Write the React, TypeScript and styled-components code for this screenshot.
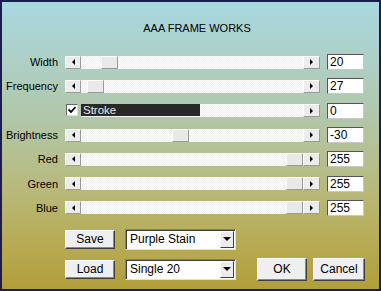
import React from "react";
import styled, { createGlobalStyle, css } from "styled-components";

const Global = createGlobalStyle`
  html, body { margin: 0; padding: 0; background: #fff; }
  #root { width: 381px; height: 291px; }
`;

const Frame = styled.div`
  width: 381px;
  height: 291px;
  box-sizing: border-box;
  border: 2px solid #1c1c4e;
  background: linear-gradient(180deg, #a8d8e0 0%, #aecfc4 22%, #b1c6a6 42%, #b7bb82 62%, #b7ad58 82%, #b29e3a 100%);
  font-family: "Liberation Sans", Arial, sans-serif;
  font-size: 11px;
  color: #000;
  display: flex;
  flex-direction: column;
`;

const Title = styled.div`
  margin-top: 19px;
  padding-left: 13px;
  height: 14px;
  line-height: 14px;
  text-align: center;
  font-size: 11px;
`;

const Rows = styled.div`
  margin-top: 15px;
  display: flex;
  flex-direction: column;
`;

const Row = styled.div`
  display: flex;
  align-items: center;
  height: 24.3px;
`;

const Label = styled.div`
  width: 56px;
  text-align: right;
  white-space: nowrap;
`;

const SliderWrap = styled.div`
  margin-left: 7px;
  width: 255px;
  height: 13px;
  display: flex;
`;

const raised = css`
  box-sizing: border-box;
  background: #ececec;
  border-top: 1px solid #ffffff;
  border-left: 1px solid #ffffff;
  border-right: 1px solid #9a9a9a;
  border-bottom: 1px solid #9a9a9a;
`;

const ArrowBtn = styled.div<{ $w: number }>`
  ${raised};
  width: ${(p) => p.$w}px;
  height: 13px;
  display: flex;
  align-items: center;
  justify-content: center;
  flex: none;
`;

const Arrow = styled.span<{ $dir: "left" | "right" }>`
  width: 0;
  height: 0;
  border-top: 3px solid transparent;
  border-bottom: 3px solid transparent;
  ${(p) =>
    p.$dir === "left"
      ? css`border-right: 3px solid #000;`
      : css`border-left: 3px solid #000;`}
`;

const Track = styled.div`
  flex: 1;
  height: 13px;
  display: flex;
  align-items: stretch;
  background: repeating-conic-gradient(#ffffff 0 25%, #eeeeee 0 50%) 0 0 / 2px 2px;
`;

const Thumb = styled.div<{ $pos: number }>`
  ${raised};
  margin-left: ${(p) => p.$pos}px;
  width: 17px;
  height: 13px;
  background: #e9e9e9;
`;

const ValueBox = styled.div`
  margin-left: 7px;
  width: 37px;
  height: 16px;
  box-sizing: border-box;
  background: #fff;
  border-top: 1px solid #555;
  border-left: 1px solid #555;
  border-right: 1px solid #c8c8c8;
  border-bottom: 1px solid #c8c8c8;
  font-size: 12px;
  line-height: 14px;
  padding-left: 2px;
`;

const Check = styled.div`
  margin-left: 1px;
  width: 12px;
  height: 12px;
  box-sizing: border-box;
  background: #fff;
  border-top: 1px solid #666;
  border-left: 1px solid #666;
  border-right: 1px solid #ddd;
  border-bottom: 1px solid #ddd;
  display: flex;
  align-items: center;
  justify-content: center;
  margin-right: 3px;
  flex: none;
`;

const Fill = styled.div`
  width: 119px;
  height: 12px;
  background: #282828;
  color: #e8e8e8;
  font-size: 11.5px;
  line-height: 12px;
  padding-left: 2px;
  box-sizing: border-box;
`;

const Bottom = styled.div`
  margin-top: 8px;
  padding-left: 63px;
  display: flex;
  flex-direction: column;
  gap: 8px;
`;

const BRow = styled.div`
  display: flex;
  align-items: center;
  height: 22px;
`;

const Button = styled.div<{ $w: number; $h: number; $ml?: number }>`
  box-sizing: border-box;
  width: ${(p) => p.$w}px;
  height: ${(p) => p.$h}px;
  margin-left: ${(p) => p.$ml ?? 0}px;
  background: #efefef;
  border-top: 1px solid #fff;
  border-left: 1px solid #fff;
  border-right: 1px solid #404040;
  border-bottom: 1px solid #404040;
  box-shadow: inset -1px -1px #8a8a8a;
  display: flex;
  align-items: center;
  justify-content: center;
  font-size: 12px;
  flex: none;
`;

const Combo = styled.div`
  margin-left: 10px;
  width: 111px;
  height: 21px;
  box-sizing: border-box;
  background: #fff;
  border-top: 1px solid #808080;
  border-left: 1px solid #808080;
  border-right: 1px solid #e0e0e0;
  border-bottom: 1px solid #e0e0e0;
  box-shadow: inset 1px 1px #404040;
  display: flex;
  align-items: center;
  padding: 0 1px 0 4px;
  font-size: 12px;
`;

const ComboText = styled.span`
  flex: 1;
`;

const DropBtn = styled.div`
  ${raised};
  background: #ececec;
  width: 14px;
  height: 17px;
  border-right-color: #404040;
  border-bottom-color: #404040;
  display: flex;
  align-items: center;
  justify-content: center;
`;

const DownArrow = styled.span`
  width: 0;
  height: 0;
  border-left: 4px solid transparent;
  border-right: 4px solid transparent;
  border-top: 4px solid #000;
`;

const sliders = [
  { label: "Width", pos: 20, value: "20" },
  { label: "Frequency", pos: 6, value: "27" },
];
const sliders2 = [
  { label: "Brightness", pos: 91, value: "-30" },
  { label: "Red", pos: 205, value: "255" },
  { label: "Green", pos: 205, value: "255" },
  { label: "Blue", pos: 205, value: "255" },
];

function Slider({ pos }: { pos: number }) {
  return (
    <SliderWrap>
      <ArrowBtn $w={16}>
        <Arrow $dir="left" />
      </ArrowBtn>
      <Track>
        <Thumb $pos={pos} />
      </Track>
      <ArrowBtn $w={17}>
        <Arrow $dir="right" />
      </ArrowBtn>
    </SliderWrap>
  );
}

export default function App() {
  return (
    <>
      <Global />
      <Frame>
        <Title>AAA FRAME WORKS</Title>
        <Rows>
          {sliders.map((s) => (
            <Row key={s.label}>
              <Label>{s.label}</Label>
              <Slider pos={s.pos} />
              <ValueBox>{s.value}</ValueBox>
            </Row>
          ))}
          <Row>
            <Label />
            <SliderWrap>
              <Check>
                <svg width="8" height="8" viewBox="0 0 8 8">
                  <path d="M0.5 3.5 L3 6 L7.5 1" stroke="#000" strokeWidth="1.8" fill="none" />
                </svg>
              </Check>
              <Track>
                <Fill>Stroke</Fill>
              </Track>
              <ArrowBtn $w={17}>
                <Arrow $dir="right" />
              </ArrowBtn>
            </SliderWrap>
            <ValueBox>0</ValueBox>
          </Row>
          {sliders2.map((s) => (
            <Row key={s.label}>
              <Label>{s.label}</Label>
              <Slider pos={s.pos} />
              <ValueBox>{s.value}</ValueBox>
            </Row>
          ))}
        </Rows>
        <Bottom>
          <BRow>
            <Button $w={50} $h={19}>Save</Button>
            <Combo>
              <ComboText>Purple Stain</ComboText>
              <DropBtn>
                <DownArrow />
              </DropBtn>
            </Combo>
          </BRow>
          <BRow>
            <Button $w={50} $h={19}>Load</Button>
            <Combo>
              <ComboText>Single 20</ComboText>
              <DropBtn>
                <DownArrow />
              </DropBtn>
            </Combo>
            <Button $w={50} $h={23} $ml={21}>OK</Button>
            <Button $w={52} $h={23} $ml={6}>Cancel</Button>
          </BRow>
        </Bottom>
      </Frame>
    </>
  );
}
